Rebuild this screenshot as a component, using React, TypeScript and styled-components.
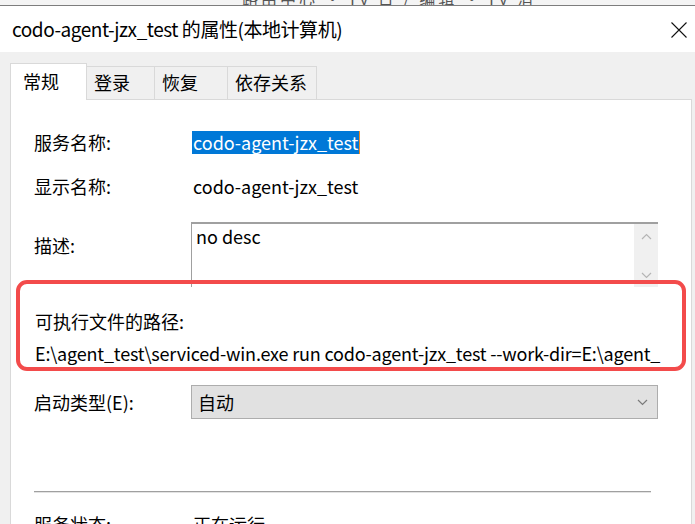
import React from "react";
import styled, { createGlobalStyle } from "styled-components";

const Global = createGlobalStyle`
  html, body { margin: 0; padding: 0; }
  body { background: #f0f0f0; font-family: "Noto Sans CJK SC", "Noto Sans", sans-serif; }
`;

const FONT = `"Noto Sans CJK SC", "Noto Sans", sans-serif`;

const Page = styled.div`
  position: relative;
  width: 695px;
  height: 524px;
  overflow: hidden;
  background: #f0f0f0;
  display: flex;
  flex-direction: column;
  font-family: ${FONT};
  color: #000;
`;

const BackStrip = styled.div`
  flex: none;
  height: 5px;
  background: #f4f4f4;
  border-bottom: 1px solid #7d7d7d;
  overflow: hidden;
  display: flex;
  align-items: flex-end;
  padding-left: 242px;
`;

const BackText = styled.span`
  font-size: 16px;
  line-height: 16px;
  color: #555;
  margin-bottom: -1px;
  white-space: nowrap;
  letter-spacing: 3px;
`;

const TitleBar = styled.div`
  flex: none;
  height: 46px;
  background: #fff;
  display: flex;
  align-items: center;
  justify-content: space-between;
  padding: 0 8px 0 12px;
`;

const Title = styled.span`
  font-size: 19px;
  line-height: 24px;
  letter-spacing: -0.45px;
  white-space: nowrap;
`;

const CloseBtn = styled.div`
  width: 16px;
  height: 16px;
  display: flex;
  margin-top: 2px;
`;

const Body = styled.div`
  flex: 1;
  min-height: 0;
  display: flex;
  flex-direction: column;
  padding: 12px 3px 0 10px;
`;

const TabRow = styled.div`
  flex: none;
  height: 36px;
  display: flex;
  align-items: flex-end;
  margin-bottom: -1px;
  position: relative;
  z-index: 1;
`;

const Tab = styled.div<{ $active?: boolean; $w: number }>`
  box-sizing: border-box;
  width: ${(p) => p.$w}px;
  height: ${(p) => (p.$active ? 37 : 34)}px;
  background: ${(p) => (p.$active ? "#fff" : "#f0f0f0")};
  border: 1px solid #d9d9d9;
  border-bottom: ${(p) => (p.$active ? "none" : "1px solid #d9d9d9")};
  border-left: ${(p) => (p.$active ? "1px solid #d9d9d9" : "none")};
  font-size: 18px;
  line-height: 22px;
  padding: ${(p) => (p.$active ? "6px 0 0 12px" : "4px 0 0 7px")};
  white-space: nowrap;
`;

const Panel = styled.div`
  flex: 1;
  min-height: 0;
  background: #fff;
  border: 1px solid #d9d9d9;
  border-bottom: none;
  display: flex;
  flex-direction: column;
  padding: 0 0 0 23px;
`;

const Row = styled.div<{ $mt: number; $h: number }>`
  flex: none;
  display: flex;
  align-items: center;
  margin-top: ${(p) => p.$mt}px;
  height: ${(p) => p.$h}px;
`;

const Label = styled.div`
  width: 159px;
  flex: none;
  font-size: 18px;
  line-height: 24px;
  white-space: nowrap;
`;

const Value = styled.span<{ $selected?: boolean }>`
  font-size: 18px;
  line-height: 23px;
  white-space: nowrap;
  padding: 0 1px 0 1px;
  margin-left: -1px;
  background: ${(p) => (p.$selected ? "#0078d7" : "transparent")};
  color: ${(p) => (p.$selected ? "#fff" : "#000")};
  border-right: ${(p) => (p.$selected ? "1px solid #f08a24" : "none")};
`;

const DescRow = styled.div`
  flex: none;
  display: flex;
  margin-top: 24px;
  height: 65px;
`;

const DescLabel = styled(Label)`
  padding-top: 11px;
`;

const DescBox = styled.div`
  box-sizing: border-box;
  margin-left: -2px;
  width: 467px;
  border-top: 2px solid #a0a0a0;
  border-left: 1px solid #a0a0a0;
  display: flex;
  justify-content: space-between;
`;

const DescText = styled.div`
  font-size: 18px;
  line-height: 22px;
  padding: 1px 0 0 4px;
`;

const ScrollBar = styled.div`
  width: 24px;
  background: #f0f0f0;
  display: flex;
  flex-direction: column;
  justify-content: space-between;
  align-items: center;
  padding: 9px 0 8px;
`;

const PathBlock = styled.div`
  flex: none;
  display: flex;
  flex-direction: column;
  margin-top: 22px;
  padding-left: 1px;
`;

const PathLabel = styled.div`
  font-size: 18px;
  line-height: 24px;
`;

const PathValue = styled.div`
  margin-top: 8px;
  font-size: 18px;
  line-height: 24px;
  white-space: nowrap;
  letter-spacing: -0.18px;
`;

const Combo = styled.div`
  box-sizing: border-box;
  margin-left: -2px;
  width: 467px;
  height: 34px;
  background: #e1e1e1;
  border: 1px solid #adadad;
  display: flex;
  align-items: center;
  justify-content: space-between;
  padding: 0 9px 0 6px;
  font-size: 18px;
`;

const Separator = styled.div`
  flex: none;
  margin-top: 72px;
  width: 617px;
  height: 0;
  border-top: 1px solid #a0a0a0;
  border-bottom: 1px solid #e3e3e3;
`;

const Annotation = styled.div`
  position: absolute;
  left: 16px;
  top: 280px;
  width: 670px;
  height: 91px;
  box-sizing: border-box;
  border: 4px solid #f34b4b;
  border-radius: 11px;
  pointer-events: none;
`;

const Chevron = ({ up, color = "#b5b5b5" }: { up?: boolean; color?: string }) => (
  <svg width="11" height="7" viewBox="0 0 11 7">
    <path
      d={up ? "M1 6 L5.5 1.5 L10 6" : "M1 1 L5.5 5.5 L10 1"}
      fill="none"
      stroke={color}
      strokeWidth="1.2"
    />
  </svg>
);

export default function App() {
  return (
    <>
      <Global />
      <Page>
        <BackStrip>
          <BackText>路由中心 · ry 日 / 编辑 · ry 消</BackText>
        </BackStrip>
        <TitleBar>
          <Title>codo-agent-jzx_test 的属性(本地计算机)</Title>
          <CloseBtn>
            <svg width="16" height="16" viewBox="0 0 16 16">
              <path d="M0.5 0.5 L15.5 15.5 M15.5 0.5 L0.5 15.5" stroke="#111" strokeWidth="1.1" fill="none" />
            </svg>
          </CloseBtn>
        </TitleBar>
        <Body>
          <TabRow>
            <Tab $active $w={77}>常规</Tab>
            <Tab $w={68}>登录</Tab>
            <Tab $w={73}>恢复</Tab>
            <Tab $w={89}>依存关系</Tab>
          </TabRow>
          <Panel>
            <Row $mt={30} $h={24}>
              <Label>服务名称:</Label>
              <Value $selected>codo-agent-jzx_test</Value>
            </Row>
            <Row $mt={20} $h={24}>
              <Label>显示名称:</Label>
              <Value>codo-agent-jzx_test</Value>
            </Row>
            <DescRow>
              <DescLabel>描述:</DescLabel>
              <DescBox>
                <DescText>no desc</DescText>
                <ScrollBar>
                  <Chevron up />
                  <Chevron />
                </ScrollBar>
              </DescBox>
            </DescRow>
            <PathBlock>
              <PathLabel>可执行文件的路径:</PathLabel>
              <PathValue>E:\agent_test\serviced-win.exe run codo-agent-jzx_test --work-dir=E:\agent_</PathValue>
            </PathBlock>
            <Row $mt={20} $h={34}>
              <Label>启动类型(E):</Label>
              <Combo>
                <span>自动</span>
                <Chevron color="#7a7a7a" />
              </Combo>
            </Row>
            <Separator />
            <Row $mt={19} $h={24}>
              <Label>服务状态:</Label>
              <Value>正在运行</Value>
            </Row>
          </Panel>
        </Body>
        <Annotation />
      </Page>
    </>
  );
}
